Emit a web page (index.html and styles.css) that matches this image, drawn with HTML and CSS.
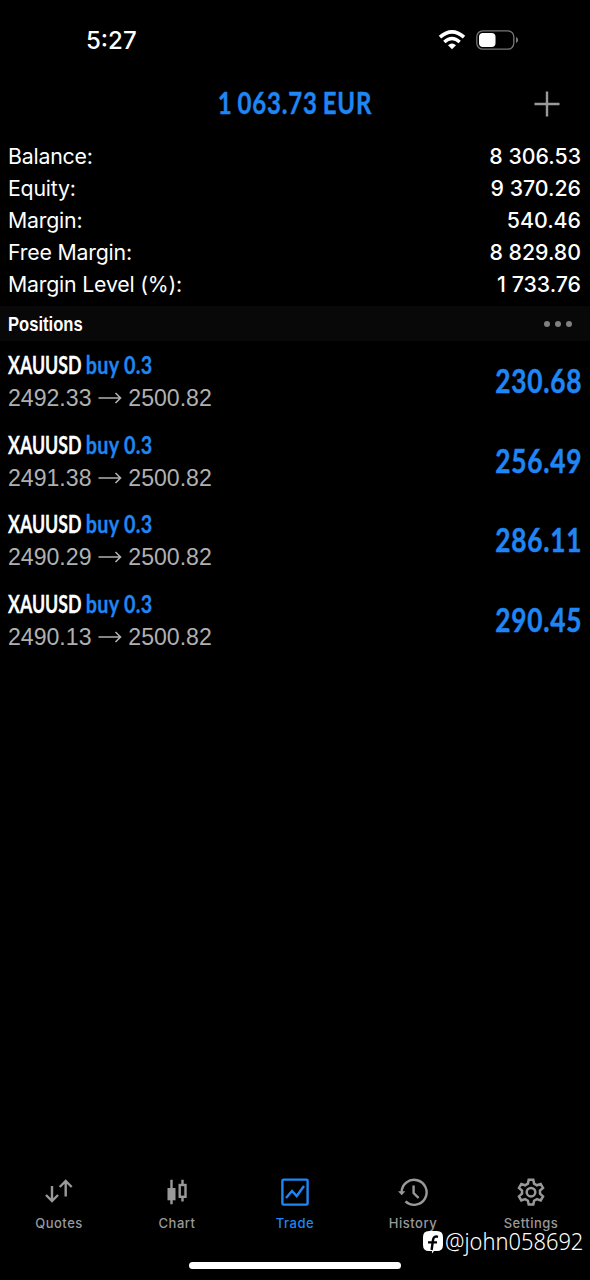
FILE: index.html
```html
<!DOCTYPE html>
<html lang="en">
<head>
    <meta charset="UTF-8">
    <meta name="viewport" content="width=device-width, initial-scale=1.0">
    <title>Trade</title>
    <link rel="stylesheet" href="styles.css">
</head>
<body>
    <div class="status-bar">
        <div class="time">5:27</div>
        <div class="status-icons">
            <svg class="wifi" width="28" height="20" viewBox="0 0 28 20">
                <path d="M2 7.2Q14-3.4 26 7.2" stroke="#fff" stroke-width="3.6" fill="none"/>
                <path d="M6.3 12Q14 5.2 21.7 12" stroke="#fff" stroke-width="3.4" fill="none"/>
                <path d="M10 15.3Q14 11.8 18 15.3L14 19.3Z" fill="#fff"/>
            </svg>
            <svg class="battery" width="43" height="20" viewBox="0 0 43 20">
                <rect x="0.8" y="0.8" width="37" height="18.4" rx="6" fill="none" stroke="#777" stroke-width="1.3"/>
                <rect x="3" y="3" width="16.5" height="14" rx="4" fill="#fff"/>
                <path d="M40 7Q42.2 8 42.2 10Q42.2 12 40 13Z" fill="#777"/>
            </svg>
        </div>
    </div>
    <div class="header">
        <h1 class="profit-total">1 063.73 EUR</h1>
        <svg class="add" width="26" height="26" viewBox="0 0 26 26">
            <path d="M13 0.5V25.5M0.5 13H25.5" stroke="#999" stroke-width="2.4"/>
        </svg>
    </div>
    <div class="account">
        <div class="account-row"><span class="label">Balance:</span><span class="value">8 306.53</span></div>
        <div class="account-row"><span class="label">Equity:</span><span class="value">9 370.26</span></div>
        <div class="account-row"><span class="label">Margin:</span><span class="value">540.46</span></div>
        <div class="account-row"><span class="label">Free Margin:</span><span class="value">8 829.80</span></div>
        <div class="account-row"><span class="label">Margin Level (%):</span><span class="value">1 733.76</span></div>
    </div>
    <div class="section-bar">
        <span class="section-title">Positions</span>
        <div class="dots"><i></i><i></i><i></i></div>
    </div>
    <div class="positions">
        <div class="position">
            <div class="details">
                <div class="symbol">XAUUSD <span class="side">buy 0.3</span></div>
                <div class="prices">2492.33 <svg class="arrow" width="24" height="12" viewBox="0 0 24 12"><path d="M0.5 6H22.5M17.5 1L22.5 6L17.5 11" /></svg> 2500.82</div>
            </div>
            <div class="profit">230.68</div>
        </div>
        <div class="position">
            <div class="details">
                <div class="symbol">XAUUSD <span class="side">buy 0.3</span></div>
                <div class="prices">2491.38 <svg class="arrow" width="24" height="12" viewBox="0 0 24 12"><path d="M0.5 6H22.5M17.5 1L22.5 6L17.5 11" /></svg> 2500.82</div>
            </div>
            <div class="profit">256.49</div>
        </div>
        <div class="position">
            <div class="details">
                <div class="symbol">XAUUSD <span class="side">buy 0.3</span></div>
                <div class="prices">2490.29 <svg class="arrow" width="24" height="12" viewBox="0 0 24 12"><path d="M0.5 6H22.5M17.5 1L22.5 6L17.5 11" /></svg> 2500.82</div>
            </div>
            <div class="profit">286.11</div>
        </div>
        <div class="position">
            <div class="details">
                <div class="symbol">XAUUSD <span class="side">buy 0.3</span></div>
                <div class="prices">2490.13 <svg class="arrow" width="24" height="12" viewBox="0 0 24 12"><path d="M0.5 6H22.5M17.5 1L22.5 6L17.5 11" /></svg> 2500.82</div>
            </div>
            <div class="profit">290.45</div>
        </div>
    </div>
    <div class="tab-bar">
        <div class="tab">
            <svg width="30" height="30" viewBox="0 0 30 30" stroke-width="2.4">
                <path d="M8 8V23M2 17L8 23L14 17M21.7 18.5V3M15.7 9L21.7 3L27.7 9"/>
            </svg>
            <span>Quotes</span>
        </div>
        <div class="tab">
            <svg width="30" height="30" viewBox="0 0 30 30" stroke-width="2.4">
                <path d="M9.5 1.7V26.3M20.5 1.7V7M20.5 18.5V23.5"/>
                <rect x="5.5" y="10" width="8" height="12.3" fill="#999" stroke="none"/>
                <rect x="17.7" y="7" width="5.8" height="11.8"/>
            </svg>
            <span>Chart</span>
        </div>
        <div class="tab active">
            <svg width="30" height="30" viewBox="0 0 30 30" stroke-width="2.4">
                <rect x="2.4" y="1.6" width="25.2" height="25" rx="1.2"/>
                <path d="M6 20L12 13L16.7 18L24 8"/>
            </svg>
            <span>Trade</span>
        </div>
        <div class="tab">
            <svg width="30" height="30" viewBox="0 0 30 30" stroke-width="2.4">
                <path d="M3.6 14.4A12.5 12.5 0 1 1 7.5 23.4"/>
                <path d="M0 13.2H7.4L3.7 17.2Z" fill="#999" stroke="none"/>
                <path d="M15.6 7.5V15L20.6 20"/>
            </svg>
            <span>History</span>
        </div>
        <div class="tab">
            <svg width="30" height="30" viewBox="0 0 30 30" stroke-width="2.5">
                <path d="M12.7 1.8H17.3L18.1 5.7L20.9 7.3L24.7 6L27 10L24 12.6V15.8L27 18.4L24.7 22.4L20.9 21.1L18.1 22.7L17.3 26.6H12.7L11.9 22.7L9.1 21.1L5.3 22.4L3 18.4L6 15.8V12.6L3 10L5.3 6L9.1 7.3L11.9 5.7Z"/>
                <circle cx="15" cy="14.2" r="4.3"/>
            </svg>
            <span>Settings</span>
        </div>
    </div>
    <div class="home-indicator"></div>
    <div class="watermark">
        <svg width="22" height="24" viewBox="0 0 22 24">
            <path d="M7 1H15Q21 1 21 7V15Q21 21 15 21H12L10 23.5V21H7Q1 21 1 15V7Q1 1 7 1Z" fill="#fff"/>
            <path d="M16 6.8Q11.6 5.6 11 10L9.6 20M6 12.4H15" stroke="#000" stroke-width="2.4" fill="none"/>
        </svg>
        <span class="handle">@john058692</span>
    </div>
</body>
</html>
```
FILE: styles.css
```css
body {
    background: #000;
    color: #fff;
    margin: 0;
    height: 1280px;
    display: flex;
    flex-direction: column;
    font-family: Inter, sans-serif;
    position: relative;
    overflow: hidden;
}
.status-bar {
    height: 80px;
    padding: 0 72px 0 86px;
    box-sizing: border-box;
    display: flex;
    justify-content: space-between;
    align-items: center;
}
.time {
    font-size: 24px;
    font-weight: 500;
}
.status-icons {
    display: flex;
    gap: 10px;
    margin-right: -1px;
}
.wifi {
    margin-left: -1px;
}
.header {
    height: 60px;
    padding: 0 30px 13px;
    box-sizing: border-box;
    display: grid;
    grid-template-columns: 26px 1fr 26px;
    align-items: center;
}
.profit-total {
    grid-column: 2;
    margin: -3px 0 0;
    text-align: center;
    color: #1f86f4;
    font-family: Lato, sans-serif;
    font-size: 30px;
    line-height: 36px;
    letter-spacing: 1px;
    word-spacing: -2px;
    white-space: nowrap;
    -webkit-text-stroke: 0.4px #1f86f4;
    transform: scaleX(0.8);
}
.account-row {
    display: flex;
    justify-content: space-between;
    height: 32px;
    line-height: 33px;
    padding: 0 9px 0 8px;
    font-size: 21.3px;
}
.label {
    letter-spacing: -0.2px;
}
.value {
    font-weight: 500;
}
.section-bar {
    margin-top: 6px;
    height: 35px;
    padding: 0 18px 0 8px;
    background: #080808;
    display: flex;
    justify-content: space-between;
    align-items: center;
}
.section-title {
    font-family: "Liberation Sans", sans-serif;
    font-weight: bold;
    font-size: 20.5px;
    line-height: 24px;
    padding-top: 1px;
    transform: scaleX(0.81);
    transform-origin: left;
}
.dots {
    display: flex;
    gap: 5px;
}
.dots i {
    width: 6px;
    height: 6px;
    border-radius: 50%;
    background: #808080;
}
.positions {
    padding-top: 7px;
}
.position {
    display: flex;
    justify-content: space-between;
    height: 79.7px;
    padding: 0 9px 0 8px;
}
.symbol {
    font-family: Lato, sans-serif;
    font-weight: bold;
    font-size: 24px;
    line-height: 33px;
    white-space: nowrap;
    -webkit-text-stroke: 0.3px;
    transform: scaleX(0.74);
    transform-origin: left;
}
.side, .profit {
    color: #1f86f4;
}
.side {
    display: inline-block;
    letter-spacing: 0.4px;
    transform: scaleX(1.11);
    transform-origin: left;
}
.prices {
    font-family: "Liberation Sans", sans-serif;
    font-size: 23.1px;
    line-height: 33px;
    padding-top: 1px;
    color: #b0b0b0;
}
.arrow {
    fill: none;
    stroke: #b0b0b0;
    stroke-width: 1.6;
    vertical-align: 2px;
}
.profit {
    font-family: Lato, sans-serif;
    font-weight: bold;
    font-size: 32px;
    line-height: 65px;
    letter-spacing: 1px;
    margin-right: -1px;
    -webkit-text-stroke: 0.5px #1f86f4;
    transform: scaleX(0.82);
    transform-origin: right;
}
.tab-bar {
    display: flex;
    margin-top: auto;
    height: 102px;
}
.tab {
    flex: 1;
    display: flex;
    flex-direction: column;
    align-items: center;
    color: #999;
    font-size: 13px;
    font-weight: 500;
    letter-spacing: 0.5px;
}
.tab svg {
    fill: none;
    stroke: currentColor;
}
.tab span {
    line-height: 18px;
    margin-top: 6px;
}
.tab.active {
    color: #1f86f4;
}
.home-indicator {
    position: absolute;
    left: 189px;
    bottom: 11px;
    width: 212px;
    height: 7px;
    border-radius: 4px;
    background: #fff;
}
.watermark {
    position: absolute;
    left: 422px;
    bottom: 26px;
    display: flex;
    align-items: center;
    gap: 1px;
    font-size: 23.5px;
    line-height: 26px;
    font-family: "Noto Sans", sans-serif;
}
.handle {
    font-weight: 300;
    margin-top: -2px;
    transform: scaleX(0.93);
    transform-origin: left;
}
```
